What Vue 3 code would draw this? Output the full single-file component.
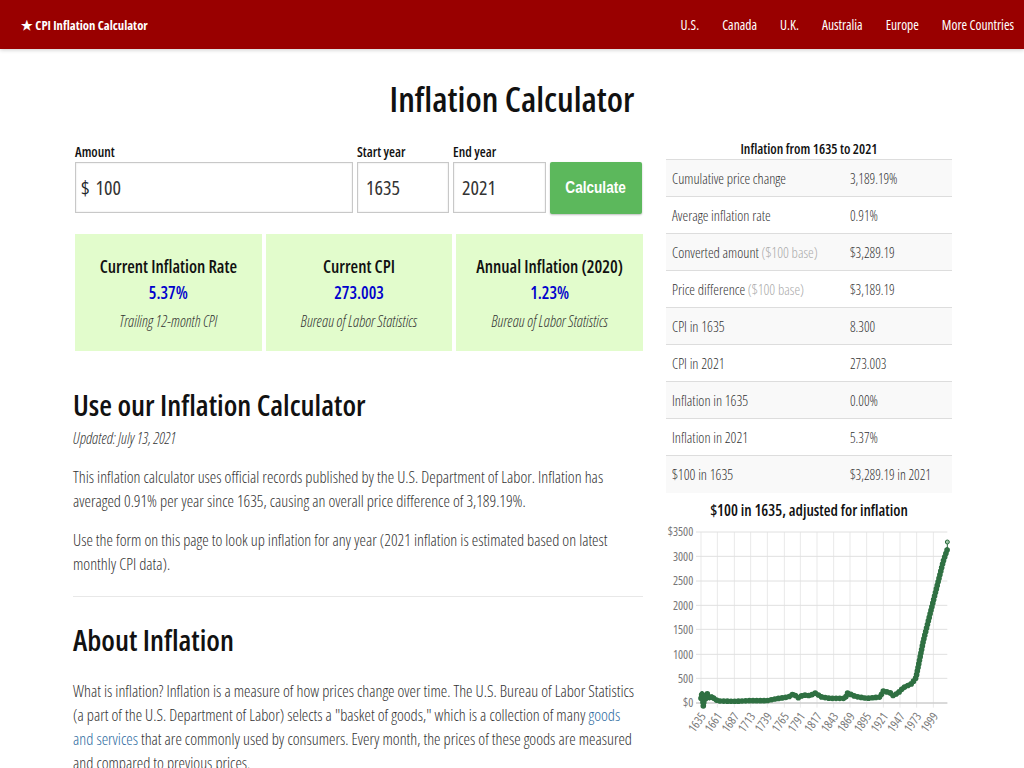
<script setup>
const links = ['U.S.', 'Canada', 'U.K.', 'Australia', 'Europe', 'More Countries']
const cards = [
  { t: 'Current Inflation Rate', v: '5.37%', n: 'Trailing 12-month CPI' },
  { t: 'Current CPI', v: '273.003', n: 'Bureau of Labor Statistics' },
  { t: 'Annual Inflation (2020)', v: '1.23%', n: 'Bureau of Labor Statistics' }
]
const rows = [
  ['Cumulative price change', '', '3,189.19%'],
  ['Average inflation rate', '', '0.91%'],
  ['Converted amount', '($100 base)', '$3,289.19'],
  ['Price difference', '($100 base)', '$3,189.19'],
  ['CPI in 1635', '', '8.300'],
  ['CPI in 2021', '', '273.003'],
  ['Inflation in 1635', '', '0.00%'],
  ['Inflation in 2021', '', '5.37%'],
  ['$100 in 1635', '', '$3,289.19 in 2021']
]
const hy = [[123,'$3500'],[196,'3000'],[270,'2500'],[343,'2000'],[415,'1500'],[490,'1000'],[562,'500'],[636,'$0']]
const years = [1635,1661,1687,1713,1739,1765,1791,1817,1843,1869,1895,1921,1947,1973,1999]
const vx = [123,172,223,272,322,373,421,471,521,570,620,670,720,770,820]
const ticks = years.map((y, i) => ({ y, x: vx[i] }))
const line = 'M123 622 L126 606 L130 645 L134 612 L138 626 L142 608 L148 622 L156 616 L165 626 L180 630 L220 631 L270 629 L320 629 L350 623 L385 618 L400 609 L415 620 L430 612 L450 614 L465 606 L485 618 L510 622 L555 622 L563 606 L585 616 L620 622 L660 618 L670 600 L690 605 L700 614 L715 605 L730 590 L755 578 L768 560 L780 500 L790 450 L810 370 L830 290 L850 210 L862 175'
</script>

<template>
  <div class="page">
    <header class="nav">
      <a class="brand">★ CPI Inflation Calculator</a>
      <nav class="links"><a v-for="l in links" :key="l">{{ l }}</a></nav>
    </header>
    <h1 class="title">Inflation Calculator</h1>
    <div class="wrap">
      <main class="main">
        <form class="form" @submit.prevent>
          <label class="f amount">
            <span class="lab">Amount</span>
            <span class="box"><span class="dollar">$</span><input value="100" /></span>
          </label>
          <label class="f start"><span class="lab">Start year</span><span class="box"><input value="1635" /></span></label>
          <label class="f end"><span class="lab">End year</span><span class="box"><input value="2021" /></span></label>
          <button class="btn"><span class="btxt">Calculate</span></button>
        </form>
        <div class="cards">
          <div v-for="c in cards" :key="c.t" class="card">
            <div class="ct">{{ c.t }}</div>
            <div class="cv">{{ c.v }}</div>
            <div class="cn">{{ c.n }}</div>
          </div>
        </div>
        <h2 class="h first">Use our Inflation Calculator</h2>
        <p class="upd">Updated: July 13, 2021</p>
        <p class="p">This inflation calculator uses official records published by the U.S. Department of Labor. Inflation has averaged 0.91% per year since 1635, causing an overall price difference of 3,189.19%.</p>
        <p class="p">Use the form on this page to look up inflation for any year (2021 inflation is estimated based on latest monthly CPI data).</p>
        <hr class="rule" />
        <h2 class="h">About Inflation</h2>
        <p class="p">What is inflation? Inflation is a measure of how prices change over time. The U.S. Bureau of Labor Statistics (a part of the U.S. Department of Labor) selects a "basket of goods," which is a collection of many <a class="lnk">goods and services</a> that are commonly used by consumers. Every month, the prices of these goods are measured and compared to previous prices.</p>
      </main>
      <aside class="side">
        <div class="tt">Inflation from 1635 to 2021</div>
        <table class="tbl">
          <tbody>
            <tr v-for="r in rows" :key="r[0]">
              <td class="a">{{ r[0] }} <span v-if="r[1]" class="mute">{{ r[1] }}</span></td>
              <td class="b">{{ r[2] }}</td>
            </tr>
          </tbody>
        </table>
        <div class="ch">$100 in 1635, adjusted for inflation</div>
        <svg class="chart" viewBox="0 96 900 654" width="300" height="218">
          <line v-for="t in ticks" :key="t.y" :x1="t.x" :x2="t.x" y1="123" y2="650" stroke="#e9e9e9" stroke-width="3" />
          <line v-for="h in hy" :key="h[0]" x1="108" x2="862" :y1="h[0]" :y2="h[0]" stroke="#e0e0e0" stroke-width="3" />
          <line x1="108" x2="862" y1="636" y2="636" stroke="#c4c4c4" stroke-width="3" />
          <text v-for="h in hy" :key="'l' + h[0]" x="100" :y="h[0] + 13" class="tx" text-anchor="end">{{ h[1] }}</text>
          <text v-for="t in ticks" :key="'y' + t.y" class="tx" text-anchor="end" :transform="`translate(${t.x + 16} 676) rotate(-55)`">{{ t.y }}</text>
          <line x1="862" y1="153" x2="862" y2="180" stroke="#2a6b3d" stroke-width="3" />
          <path :d="line" fill="none" stroke="#2a6b3d" stroke-width="12" stroke-linejoin="round" stroke-linecap="round" />
          <path :d="line" fill="none" stroke="#2f7042" stroke-width="17" stroke-dasharray="0 11" stroke-linecap="round" />
          <circle cx="862" cy="153" r="6" fill="#9dc4a6" stroke="#2a6b3d" stroke-width="3" />
        </svg>
      </aside>
    </div>
  </div>
</template>

<style>
html, body { margin: 0; height: 768px; overflow: hidden; background: #fff; }
</style>

<style scoped>
.page { height: 768px; overflow: hidden; font-family: "Open Sans", "Liberation Sans", sans-serif; font-stretch: 75%; color: #212529; }
.nav { height: 49px; background: #990000; display: flex; align-items: center; justify-content: space-between; padding: 0 10px 0 21px; box-shadow: 0 1px 4px rgba(0,0,0,.2); color: #fff; }
.brand { font-weight: 700; font-size: 12.7px; }
.links { display: flex; gap: 23px; font-size: 13.5px; }
.title { margin: 0; padding-top: 29px; height: 50px; line-height: 42px; text-align: center; font-size: 35px; font-weight: 600; color: #111; }
.wrap { display: flex; padding: 16px 72px 0 73px; gap: 23px; align-items: flex-start; }
.main { width: 570px; flex: none; }
.side { width: 286px; flex: none; margin-top: -5px; }
.form { display: flex; gap: 4px; align-items: flex-end; padding-left: 2px; }
.f { display: flex; flex-direction: column; }
.lab { font-size: 13.7px; font-weight: 600; line-height: 16px; margin-bottom: 2px; color: #111; }
.box { display: flex; align-items: center; box-sizing: border-box; height: 51px; border: 1px solid #c8c8c8; box-shadow: inset 0 0 2px #ddd; padding: 0 8px; background: #fff; font-size: 20px; }
.amount { width: 278px; }
.start { width: 92px; }
.end { width: 93px; }
.amount .box { padding-left: 5px; }
.dollar { margin-right: 6px; }
input { border: 0; outline: 0; font: inherit; font-stretch: 75%; width: 100%; padding: 0; color: #333; background: none; }
.btn { width: 92px; height: 52px; margin-bottom: -1px; border: 0; background: #5cb85c; color: #fff; font: 700 16px "Liberation Sans", sans-serif; border-radius: 2px; box-shadow: 0 1px 2px rgba(0,0,0,.25); padding: 0; }
.btxt { display: inline-block; transform: scaleX(.85); }
.cards { display: flex; gap: 4px; margin: 21px 0 0 2px; }
.card { width: 187px; height: 117px; background: #e2fccc; text-align: center; box-sizing: border-box; padding-top: 21px; }
.ct { font-size: 17.4px; font-weight: 600; line-height: 22px; color: #111; }
.cv { font-size: 17px; font-weight: 600; color: #0000cc; line-height: 24px; margin-top: 4px; }
.cn { font-size: 15.5px; font-style: italic; font-weight: 300; line-height: 18px; margin-top: 7px; color: #333; }
.h { margin: 0; font-size: 29.4px; font-weight: 600; line-height: 36px; color: #111; }
.first { margin-top: 36px; }
.upd { margin: 5px 0 0; font-size: 15.6px; font-style: italic; font-weight: 300; line-height: 20px; color: #333; }
.p { margin: 17px 0 0; font-size: 16.3px; font-weight: 300; line-height: 24px; color: #333; }
.p + .p { margin-top: 15px; }
.rule { border: 0; border-top: 1px solid #e8e8e8; margin: 20px 0 0; }
.rule + .h { margin-top: 25px; }
.rule + .h + .p { margin-top: 21px; }
.lnk { color: #2c6aa0; }
.tt { text-align: center; font-size: 13.8px; font-weight: 600; line-height: 20px; color: #111; }
.tbl { width: 100%; border-collapse: collapse; }
.tbl tr { height: 37px; border-top: 1px solid #ddd; }
.tbl tr:nth-child(odd) { background: #f9f9f9; }
.tbl td { padding: 0 6px; font-size: 14.4px; font-weight: 300; color: #333; }
.tbl td.b { font-size: 13.8px; }
.a { width: 166px; }
.mute { color: #aaa; }
.ch { text-align: center; font-size: 15.5px; font-weight: 600; line-height: 20px; margin-top: 7px; color: #111; }
.chart { display: block; margin: 3px 0 0 -6px; }
.tx { font-size: 36px; fill: #777; font-family: "Open Sans", sans-serif; font-stretch: 75%; }
</style>
